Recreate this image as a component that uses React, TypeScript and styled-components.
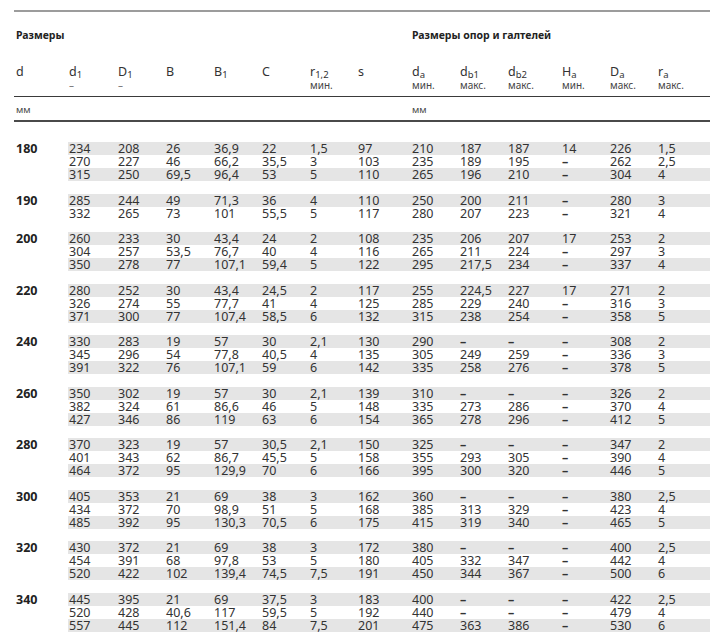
import React from "react";
import styled, { createGlobalStyle } from "styled-components";

const Global = createGlobalStyle`
  html, body { margin: 0; padding: 0; background: #ffffff; }
  body { font-family: "Noto Sans", "Open Sans", sans-serif; color: #333; }
`;

const COLS = "54px 49px 48px 48px 48px 48px 48px 54px 48px 48px 54px 48px 48px 1fr";

const Page = styled.div`
  padding: 10px 0 0 14px;
  width: 696px;
`;

const Sheet = styled.div`
  border-top: 2px solid #9c9c9c;
`;

const SectionRow = styled.div`
  display: grid;
  grid-template-columns: ${COLS};
  padding-top: 16px;
`;

const SectionTitle = styled.div<{ $start: number; $end: number }>`
  grid-column: ${(p) => p.$start} / ${(p) => p.$end};
  padding-left: ${(p) => (p.$start > 1 ? "1px" : "2px")};
  font-weight: 700;
  font-size: 10.5px;
  line-height: 14px;
  color: #222;
  white-space: nowrap;
`;

const HeadRow = styled.div`
  display: grid;
  grid-template-columns: ${COLS};
  margin-top: 23px;
  padding-bottom: 5px;
  border-bottom: 1px solid #3a3a3a;
`;

const HeadCell = styled.div<{ $first?: boolean }>`
  padding-left: ${(p) => (p.$first ? "2px" : "1px")};
  display: flex;
  flex-direction: column;
`;

const Symbol = styled.span`
  font-size: 12.5px;
  line-height: 14px;
  color: #333;
  white-space: nowrap;
`;

const Sub = styled.sub`
  font-size: 9.5px;
  line-height: 0;
  vertical-align: -2px;
`;

const Note = styled.span<{ $dash?: boolean }>`
  font-size: 10px;
  line-height: 12px;
  color: ${(p) => (p.$dash ? "#777" : "#444")};
  white-space: nowrap;
`;

const UnitRow = styled.div`
  display: grid;
  grid-template-columns: ${COLS};
  padding: 7px 0 4px;
  border-bottom: 2px solid #4a4a4a;
`;

const Unit = styled.span<{ $col: number }>`
  grid-column: ${(p) => p.$col};
  padding-left: ${(p) => (p.$col === 1 ? "2px" : "1px")};
  font-size: 9.5px;
  line-height: 12px;
  color: #444;
`;

const Body = styled.div`
  padding-top: 20px;
  display: flex;
  flex-direction: column;
  gap: 12.5px;
`;

const Group = styled.div`
  display: flex;
  flex-direction: column;
`;

const Row = styled.div`
  display: grid;
  grid-template-columns: ${COLS};
  height: 13px;
`;

const Bore = styled.div`
  padding-left: 2px;
  font-weight: 700;
  font-size: 12.5px;
  line-height: 13px;
  color: #222;
`;

const Cell = styled.div<{ $striped: boolean; $dash: boolean }>`
  padding-left: 1px;
  font-size: 12.5px;
  line-height: 13px;
  color: #333;
  white-space: nowrap;
  background: ${(p) => (p.$striped ? "#e5e5e5" : "transparent")};
  font-weight: ${(p) => (p.$dash ? 700 : 400)};
`;

type Head = { sym: string; sub?: string; note?: string; dash?: boolean };

const heads: Head[] = [
  { sym: "d" },
  { sym: "d", sub: "1", note: "–", dash: true },
  { sym: "D", sub: "1", note: "–", dash: true },
  { sym: "B" },
  { sym: "B", sub: "1" },
  { sym: "C" },
  { sym: "r", sub: "1,2", note: "мин." },
  { sym: "s" },
  { sym: "d", sub: "a", note: "мин." },
  { sym: "d", sub: "b1", note: "макс." },
  { sym: "d", sub: "b2", note: "макс." },
  { sym: "H", sub: "a", note: "мин." },
  { sym: "D", sub: "a", note: "макс." },
  { sym: "r", sub: "a", note: "макс." },
];

const groups: { d: string; rows: string[] }[] = [
  {
    d: "180",
    rows: [
      "234 208 26 36,9 22 1,5 97 210 187 187 14 226 1,5",
      "270 227 46 66,2 35,5 3 103 235 189 195 – 262 2,5",
      "315 250 69,5 96,4 53 5 110 265 196 210 – 304 4",
    ],
  },
  {
    d: "190",
    rows: [
      "285 244 49 71,3 36 4 110 250 200 211 – 280 3",
      "332 265 73 101 55,5 5 117 280 207 223 – 321 4",
    ],
  },
  {
    d: "200",
    rows: [
      "260 233 30 43,4 24 2 108 235 206 207 17 253 2",
      "304 257 53,5 76,7 40 4 116 265 211 224 – 297 3",
      "350 278 77 107,1 59,4 5 122 295 217,5 234 – 337 4",
    ],
  },
  {
    d: "220",
    rows: [
      "280 252 30 43,4 24,5 2 117 255 224,5 227 17 271 2",
      "326 274 55 77,7 41 4 125 285 229 240 – 316 3",
      "371 300 77 107,4 58,5 6 132 315 238 254 – 358 5",
    ],
  },
  {
    d: "240",
    rows: [
      "330 283 19 57 30 2,1 130 290 – – – 308 2",
      "345 296 54 77,8 40,5 4 135 305 249 259 – 336 3",
      "391 322 76 107,1 59 6 142 335 258 276 – 378 5",
    ],
  },
  {
    d: "260",
    rows: [
      "350 302 19 57 30 2,1 139 310 – – – 326 2",
      "382 324 61 86,6 46 5 148 335 273 286 – 370 4",
      "427 346 86 119 63 6 154 365 278 296 – 412 5",
    ],
  },
  {
    d: "280",
    rows: [
      "370 323 19 57 30,5 2,1 150 325 – – – 347 2",
      "401 343 62 86,7 45,5 5 158 355 293 305 – 390 4",
      "464 372 95 129,9 70 6 166 395 300 320 – 446 5",
    ],
  },
  {
    d: "300",
    rows: [
      "405 353 21 69 38 3 162 360 – – – 380 2,5",
      "434 372 70 98,9 51 5 168 385 313 329 – 423 4",
      "485 392 95 130,3 70,5 6 175 415 319 340 – 465 5",
    ],
  },
  {
    d: "320",
    rows: [
      "430 372 21 69 38 3 172 380 – – – 400 2,5",
      "454 391 68 97,8 53 5 180 405 332 347 – 442 4",
      "520 422 102 139,4 74,5 7,5 191 450 344 367 – 500 6",
    ],
  },
  {
    d: "340",
    rows: [
      "445 395 21 69 37,5 3 183 400 – – – 422 2,5",
      "520 428 40,6 117 59,5 5 192 440 – – – 479 4",
      "557 445 112 151,4 84 7,5 201 475 363 386 – 530 6",
    ],
  },
];

export default function App() {
  return (
    <>
      <Global />
      <Page>
        <Sheet>
          <SectionRow>
            <SectionTitle $start={1} $end={9}>Размеры</SectionTitle>
            <SectionTitle $start={9} $end={15}>Размеры опор и галтелей</SectionTitle>
          </SectionRow>
          <HeadRow>
            {heads.map((h, i) => (
              <HeadCell key={i} $first={i === 0}>
                <Symbol>
                  {h.sym}
                  {h.sub && <Sub>{h.sub}</Sub>}
                </Symbol>
                {h.note && <Note $dash={h.dash}>{h.note}</Note>}
              </HeadCell>
            ))}
          </HeadRow>
          <UnitRow>
            <Unit $col={1}>мм</Unit>
            <Unit $col={9}>мм</Unit>
          </UnitRow>
          <Body>
            {groups.map((g) => (
              <Group key={g.d}>
                {g.rows.map((r, ri) => (
                  <Row key={ri}>
                    <Bore>{ri === 0 ? g.d : ""}</Bore>
                    {r.split(" ").map((v, ci) => (
                      <Cell key={ci} $striped={ri % 2 === 0} $dash={v === "–"}>
                        {v}
                      </Cell>
                    ))}
                  </Row>
                ))}
              </Group>
            ))}
          </Body>
        </Sheet>
      </Page>
    </>
  );
}
